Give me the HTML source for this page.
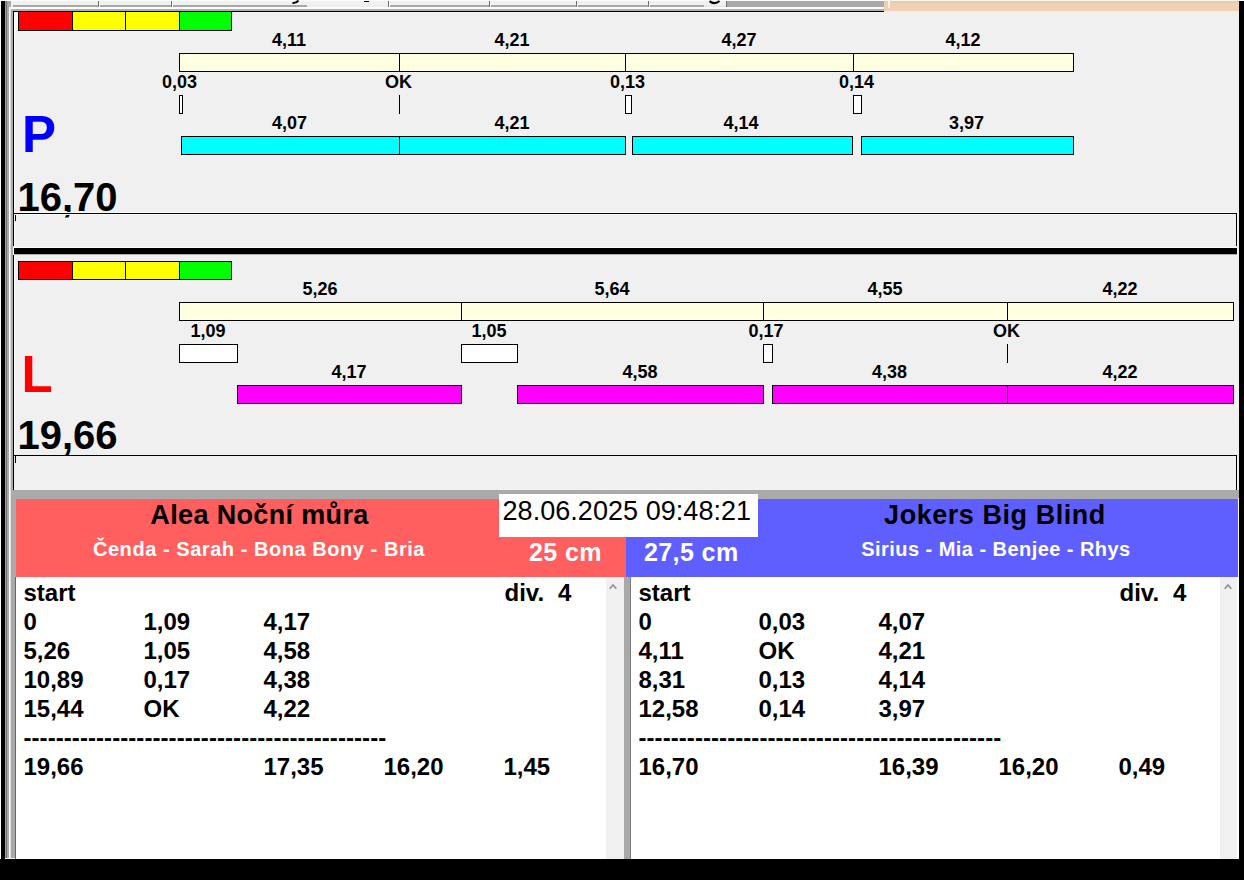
<!DOCTYPE html>
<html><head><meta charset="utf-8"><style>
html,body{margin:0;padding:0;}
body{width:1244px;height:880px;overflow:hidden;position:relative;background:#f0f0f0;font-family:"Liberation Sans",sans-serif;}
.a{position:absolute;}
.t{position:absolute;white-space:nowrap;}
</style></head><body>
<div class="a" style="left:0px;top:0px;width:1px;height:880px;background:#fafafa;"></div>
<div class="a" style="left:1px;top:1px;width:4px;height:879px;background:#000;"></div>
<div class="a" style="left:5px;top:1px;width:1px;height:857px;background:#a0a0a0;"></div>
<div class="a" style="left:6px;top:1px;width:1px;height:857px;background:#707070;"></div>
<div class="a" style="left:7px;top:1px;width:2px;height:857px;background:#aaaaaa;"></div>
<div class="a" style="left:9px;top:1px;width:2px;height:6px;background:#aaaaaa;"></div>
<div class="a" style="left:9px;top:7px;width:1px;height:851px;background:#ffffff;"></div>
<div class="a" style="left:10px;top:7px;width:1px;height:851px;background:#e0e0e0;"></div>
<div class="a" style="left:11px;top:9px;width:2px;height:481px;background:#aaaaaa;"></div>
<div class="a" style="left:13px;top:11px;width:1px;height:235px;background:#000;"></div>
<div class="a" style="left:13px;top:255px;width:1px;height:235px;background:#000;"></div>
<div class="a" style="left:13px;top:246px;width:1px;height:9px;background:#fafafa;"></div>
<div class="a" style="left:14px;top:12px;width:1px;height:234px;background:#ffffff;"></div>
<div class="a" style="left:14px;top:256px;width:1px;height:199px;background:#ffffff;"></div>
<div class="a" style="left:11px;top:498px;width:4px;height:360px;background:#aaaaaa;"></div>
<div class="a" style="left:15px;top:577px;width:1px;height:282px;background:#666666;"></div>
<div class="a" style="left:1239px;top:1px;width:5px;height:879px;background:#000;"></div>
<div class="a" style="left:1239px;top:0px;width:5px;height:1px;background:#fdfdf6;"></div>
<div class="a" style="left:0px;top:0px;width:884px;height:1px;background:#fcfcfc;"></div>
<div class="a" style="left:13px;top:1px;width:871px;height:4px;background:#eff2ef;"></div>
<div class="a" style="left:13px;top:5px;width:871px;height:2px;background:#a8a8a8;"></div>
<div class="a" style="left:98px;top:1px;width:1px;height:6px;background:#707070;"></div>
<div class="a" style="left:99px;top:1px;width:1px;height:6px;background:#ffffff;"></div>
<div class="a" style="left:171px;top:1px;width:1px;height:6px;background:#707070;"></div>
<div class="a" style="left:172px;top:1px;width:1px;height:6px;background:#ffffff;"></div>
<div class="a" style="left:388px;top:1px;width:1px;height:6px;background:#707070;"></div>
<div class="a" style="left:389px;top:1px;width:1px;height:6px;background:#ffffff;"></div>
<div class="a" style="left:489px;top:1px;width:1px;height:6px;background:#707070;"></div>
<div class="a" style="left:490px;top:1px;width:1px;height:6px;background:#ffffff;"></div>
<div class="a" style="left:576px;top:1px;width:1px;height:6px;background:#707070;"></div>
<div class="a" style="left:577px;top:1px;width:1px;height:6px;background:#ffffff;"></div>
<div class="a" style="left:648px;top:1px;width:1px;height:6px;background:#707070;"></div>
<div class="a" style="left:649px;top:1px;width:1px;height:6px;background:#ffffff;"></div>
<div class="a" style="left:726px;top:1px;width:1px;height:6px;background:#707070;"></div>
<div class="a" style="left:727px;top:1px;width:1px;height:6px;background:#ffffff;"></div>
<div class="a" style="left:727px;top:1px;width:157px;height:5px;background:#aaaaaa;"></div>
<div class="a" style="left:727px;top:6px;width:157px;height:1px;background:#a8a8a8;"></div>
<div class="a" style="left:307px;top:5px;width:81px;height:2px;background:#eeeeee;"></div>
<div class="a" style="left:704px;top:5px;width:22px;height:2px;background:#e8e8e8;"></div>
<svg class="a" style="left:290px;top:0px" width="12" height="5"><path d="M2.5 3 Q6 3.4 8.5 0.5" stroke="#000" stroke-width="2" fill="none"/></svg>
<div class="a" style="left:364px;top:1px;width:5px;height:1px;background:#000;"></div>
<svg class="a" style="left:706px;top:0px" width="16" height="6"><path d="M3.5 1.2 Q8.5 5.2 13.5 1.0" stroke="#000" stroke-width="2.2" fill="none"/></svg>
<div class="a" style="left:9px;top:7px;width:875px;height:2px;background:#fcfcfc;"></div>
<div class="a" style="left:11px;top:9px;width:873px;height:2px;background:#b0b0b0;"></div>
<div class="a" style="left:13px;top:11px;width:871px;height:1px;background:#000;"></div>
<div class="a" style="left:884px;top:0px;width:355px;height:11px;background:#efd1b4;"></div>
<div class="a" style="left:884px;top:11px;width:355px;height:2px;background:#f2efea;"></div>
<div class="a" style="left:884px;top:0px;width:355px;height:1px;background:#fbf5e8;"></div>
<div class="a" style="left:884px;top:1px;width:355px;height:2px;background:#e3cdb8;"></div>
<div class="a" style="left:888px;top:0px;width:2px;height:8px;background:#fff4e4;"></div>
<div class="a" style="left:18px;top:11px;width:55px;height:20px;background:#ff0000;border:1px solid #000;box-sizing:border-box;"></div>
<div class="a" style="left:72px;top:11px;width:54px;height:20px;background:#ffff00;border:1px solid #000;box-sizing:border-box;"></div>
<div class="a" style="left:125px;top:11px;width:55px;height:20px;background:#ffff00;border:1px solid #000;box-sizing:border-box;"></div>
<div class="a" style="left:179px;top:11px;width:53px;height:20px;background:#00ff00;border:1px solid #000;box-sizing:border-box;"></div>
<div class="a" style="left:14px;top:12px;width:4px;height:18px;background:#fafafa;"></div>
<div class="a" style="left:179px;top:53px;width:895px;height:19px;background:#ffffe1;border:1px solid #000;box-sizing:border-box;"></div>
<div class="a" style="left:399px;top:53px;width:1px;height:19px;background:#000;"></div>
<div class="a" style="left:625px;top:53px;width:1px;height:19px;background:#000;"></div>
<div class="a" style="left:853px;top:53px;width:1px;height:19px;background:#000;"></div>
<div class="t" style="left:-111px;width:800px;text-align:center;top:28.76px;font-size:18px;line-height:22px;color:#000;font-weight:bold;">4,11</div>
<div class="t" style="left:112px;width:800px;text-align:center;top:28.76px;font-size:18px;line-height:22px;color:#000;font-weight:bold;">4,21</div>
<div class="t" style="left:339px;width:800px;text-align:center;top:28.76px;font-size:18px;line-height:22px;color:#000;font-weight:bold;">4,27</div>
<div class="t" style="left:563px;width:800px;text-align:center;top:28.76px;font-size:18px;line-height:22px;color:#000;font-weight:bold;">4,12</div>
<div class="t" style="left:-220.5px;width:800px;text-align:center;top:70.76px;font-size:18px;line-height:22px;color:#000;font-weight:bold;">0,03</div>
<div class="t" style="left:-1.5px;width:800px;text-align:center;top:70.76px;font-size:18px;line-height:22px;color:#000;font-weight:bold;">OK</div>
<div class="t" style="left:227.5px;width:800px;text-align:center;top:70.76px;font-size:18px;line-height:22px;color:#000;font-weight:bold;">0,13</div>
<div class="t" style="left:456.5px;width:800px;text-align:center;top:70.76px;font-size:18px;line-height:22px;color:#000;font-weight:bold;">0,14</div>
<div class="a" style="left:179px;top:95px;width:4px;height:19px;background:#ffffff;border:1px solid #000;box-sizing:border-box;"></div>
<div class="a" style="left:399px;top:95px;width:1px;height:19px;background:#000;"></div>
<div class="a" style="left:625px;top:95px;width:7px;height:19px;background:#ffffff;border:1px solid #000;box-sizing:border-box;"></div>
<div class="a" style="left:853px;top:95px;width:9px;height:19px;background:#ffffff;border:1px solid #000;box-sizing:border-box;"></div>
<div class="t" style="left:-110.5px;width:800px;text-align:center;top:111.76px;font-size:18px;line-height:22px;color:#000;font-weight:bold;">4,07</div>
<div class="t" style="left:112px;width:800px;text-align:center;top:111.76px;font-size:18px;line-height:22px;color:#000;font-weight:bold;">4,21</div>
<div class="t" style="left:341px;width:800px;text-align:center;top:111.76px;font-size:18px;line-height:22px;color:#000;font-weight:bold;">4,14</div>
<div class="t" style="left:566.5px;width:800px;text-align:center;top:111.76px;font-size:18px;line-height:22px;color:#000;font-weight:bold;">3,97</div>
<div class="a" style="left:181px;top:136px;width:219px;height:19px;background:#00ffff;border:1px solid #000;box-sizing:border-box;"></div>
<div class="a" style="left:399px;top:136px;width:227px;height:19px;background:#00ffff;border:1px solid #000;box-sizing:border-box;"></div>
<div class="a" style="left:632px;top:136px;width:221px;height:19px;background:#00ffff;border:1px solid #000;box-sizing:border-box;"></div>
<div class="a" style="left:861px;top:136px;width:213px;height:19px;background:#00ffff;border:1px solid #000;box-sizing:border-box;"></div>
<div class="t" style="left:22px;top:104.03px;font-size:51px;line-height:61px;color:#0000ff;font-weight:bold;">P</div>
<div class="t" style="left:17.5px;top:173.14px;font-size:40px;line-height:48px;color:#000;font-weight:bold;">16,70</div>
<div class="a" style="left:13px;top:213px;width:1224px;height:1px;background:#000;"></div>
<div class="a" style="left:1236px;top:213px;width:1px;height:33px;background:#000;"></div>
<div class="a" style="left:13px;top:247px;width:1224px;height:1px;background:#fcfcfc;"></div>
<div class="a" style="left:15px;top:214px;width:1px;height:7px;background:#000;"></div>
<div class="a" style="left:14px;top:248px;width:1223px;height:6px;background:#000;"></div>
<div class="a" style="left:14px;top:254px;width:1223px;height:1px;background:#b0b0b0;"></div>
<div class="a" style="left:14px;top:212px;width:1222px;height:1px;background:#fafafa;"></div>
<div class="a" style="left:14px;top:214px;width:1222px;height:1px;background:#fafafa;"></div>
<div class="a" style="left:18px;top:261px;width:55px;height:19px;background:#ff0000;border:1px solid #000;box-sizing:border-box;"></div>
<div class="a" style="left:72px;top:261px;width:54px;height:19px;background:#ffff00;border:1px solid #000;box-sizing:border-box;"></div>
<div class="a" style="left:125px;top:261px;width:55px;height:19px;background:#ffff00;border:1px solid #000;box-sizing:border-box;"></div>
<div class="a" style="left:179px;top:261px;width:53px;height:19px;background:#00ff00;border:1px solid #000;box-sizing:border-box;"></div>
<div class="a" style="left:179px;top:302px;width:1055px;height:19px;background:#ffffe1;border:1px solid #000;box-sizing:border-box;"></div>
<div class="a" style="left:461px;top:302px;width:1px;height:19px;background:#000;"></div>
<div class="a" style="left:763px;top:302px;width:1px;height:19px;background:#000;"></div>
<div class="a" style="left:1007px;top:302px;width:1px;height:19px;background:#000;"></div>
<div class="t" style="left:-80px;width:800px;text-align:center;top:277.76px;font-size:18px;line-height:22px;color:#000;font-weight:bold;">5,26</div>
<div class="t" style="left:212px;width:800px;text-align:center;top:277.76px;font-size:18px;line-height:22px;color:#000;font-weight:bold;">5,64</div>
<div class="t" style="left:485px;width:800px;text-align:center;top:277.76px;font-size:18px;line-height:22px;color:#000;font-weight:bold;">4,55</div>
<div class="t" style="left:720px;width:800px;text-align:center;top:277.76px;font-size:18px;line-height:22px;color:#000;font-weight:bold;">4,22</div>
<div class="t" style="left:-192px;width:800px;text-align:center;top:320.26px;font-size:18px;line-height:22px;color:#000;font-weight:bold;">1,09</div>
<div class="t" style="left:89px;width:800px;text-align:center;top:320.26px;font-size:18px;line-height:22px;color:#000;font-weight:bold;">1,05</div>
<div class="t" style="left:366px;width:800px;text-align:center;top:320.26px;font-size:18px;line-height:22px;color:#000;font-weight:bold;">0,17</div>
<div class="t" style="left:606.5px;width:800px;text-align:center;top:320.26px;font-size:18px;line-height:22px;color:#000;font-weight:bold;">OK</div>
<div class="a" style="left:179px;top:344px;width:59px;height:19px;background:#ffffff;border:1px solid #000;box-sizing:border-box;"></div>
<div class="a" style="left:461px;top:344px;width:57px;height:19px;background:#ffffff;border:1px solid #000;box-sizing:border-box;"></div>
<div class="a" style="left:763px;top:344px;width:10px;height:19px;background:#ffffff;border:1px solid #000;box-sizing:border-box;"></div>
<div class="a" style="left:1007px;top:344px;width:1px;height:19px;background:#000;"></div>
<div class="t" style="left:-51px;width:800px;text-align:center;top:361.26px;font-size:18px;line-height:22px;color:#000;font-weight:bold;">4,17</div>
<div class="t" style="left:240px;width:800px;text-align:center;top:361.26px;font-size:18px;line-height:22px;color:#000;font-weight:bold;">4,58</div>
<div class="t" style="left:489.5px;width:800px;text-align:center;top:361.26px;font-size:18px;line-height:22px;color:#000;font-weight:bold;">4,38</div>
<div class="t" style="left:720px;width:800px;text-align:center;top:361.26px;font-size:18px;line-height:22px;color:#000;font-weight:bold;">4,22</div>
<div class="a" style="left:237px;top:385px;width:225px;height:19px;background:#ff00ff;border:1px solid #000;box-sizing:border-box;"></div>
<div class="a" style="left:517px;top:385px;width:247px;height:19px;background:#ff00ff;border:1px solid #000;box-sizing:border-box;"></div>
<div class="a" style="left:772px;top:385px;width:236px;height:19px;background:#ff00ff;border:1px solid #000;box-sizing:border-box;"></div>
<div class="a" style="left:1007px;top:385px;width:227px;height:19px;background:#ff00ff;border:1px solid #000;box-sizing:border-box;"></div>
<div class="t" style="left:21.5px;top:344.23px;font-size:51px;line-height:61px;color:#ff0000;font-weight:bold;">L</div>
<div class="t" style="left:17.5px;top:411.14px;font-size:40px;line-height:48px;color:#000;font-weight:bold;">19,66</div>
<div class="a" style="left:13px;top:455px;width:1224px;height:1px;background:#000;"></div>
<div class="a" style="left:1236px;top:455px;width:1px;height:35px;background:#000;"></div>
<div class="a" style="left:15px;top:456px;width:1px;height:7px;background:#000;"></div>
<div class="a" style="left:11px;top:490px;width:1228px;height:9px;background:#aaaaaa;"></div>
<div class="a" style="left:15px;top:499px;width:1px;height:78px;background:#aaaaaa;"></div>
<div class="a" style="left:16px;top:499px;width:610px;height:78px;background:#ff5f5f;"></div>
<div class="a" style="left:626px;top:499px;width:612px;height:78px;background:#5f5fff;"></div>
<div class="a" style="left:1238px;top:498px;width:1px;height:360px;background:#fcfcfc;"></div>
<div class="a" style="left:499px;top:494px;width:259px;height:43px;background:#ffffff;"></div>
<div class="t" style="left:502.5px;top:494.64px;font-size:27px;line-height:32px;color:#000;font-weight:normal;letter-spacing:0.05px;">28.06.2025 09:48:21</div>
<div class="t" style="left:-140.5px;width:800px;text-align:center;top:498.94px;font-size:27px;line-height:32px;color:#000;font-weight:bold;letter-spacing:0.35px;">Alea Noční můra</div>
<div class="t" style="left:-141px;width:800px;text-align:center;top:537.07px;font-size:20px;line-height:24px;color:#ffffff;font-weight:bold;letter-spacing:0.55px;">Čenda - Sarah - Bona Bony - Bria</div>
<div class="t" style="left:529px;top:537.34px;font-size:25px;line-height:30px;color:#ffffff;font-weight:bold;letter-spacing:0.4px;">25 cm</div>
<div class="t" style="left:595px;width:800px;text-align:center;top:498.94px;font-size:27px;line-height:32px;color:#000;font-weight:bold;letter-spacing:0.55px;">Jokers Big Blind</div>
<div class="t" style="left:596px;width:800px;text-align:center;top:537.07px;font-size:20px;line-height:24px;color:#ffffff;font-weight:bold;letter-spacing:0.45px;">Sirius - Mia - Benjee - Rhys</div>
<div class="t" style="left:644px;top:537.34px;font-size:25px;line-height:30px;color:#ffffff;font-weight:bold;letter-spacing:0.4px;">27,5 cm</div>
<div class="a" style="left:16px;top:577px;width:590px;height:282px;background:#ffffff;"></div>
<div class="a" style="left:606px;top:577px;width:17px;height:282px;background:#f0f0f0;"></div>
<div class="a" style="left:624px;top:577px;width:6px;height:282px;background:#a8a8a8;"></div>
<div class="a" style="left:630px;top:577px;width:1px;height:282px;background:#808080;"></div>
<div class="a" style="left:631px;top:577px;width:589px;height:282px;background:#ffffff;"></div>
<div class="a" style="left:1220px;top:577px;width:17px;height:282px;background:#f0f0f0;"></div>
<div class="a" style="left:1237px;top:577px;width:2px;height:282px;background:#fcfcfc;"></div>
<svg class="a" style="left:608.3px;top:582px" width="10" height="8"><path d="M1.7 6.7 L5 3 L8.3 6.7" stroke="#8c948c" stroke-width="1.7" fill="none"/></svg>
<svg class="a" style="left:1223.3px;top:582px" width="10" height="8"><path d="M1.7 6.7 L5 3 L8.3 6.7" stroke="#8c948c" stroke-width="1.7" fill="none"/></svg>
<div class="t" style="left:558px;top:578.18px;font-size:24px;line-height:29px;color:#000;font-weight:bold;">4</div>
<div class="t" style="left:1173px;top:578.18px;font-size:24px;line-height:29px;color:#000;font-weight:bold;">4</div>
<div class="t" style="left:23.5px;top:578.18px;font-size:24px;line-height:29px;color:#000;font-weight:bold;white-space:pre;">start</div>
<div class="t" style="left:504.5px;top:578.18px;font-size:24px;line-height:29px;color:#000;font-weight:bold;white-space:pre;">div.</div>
<div class="t" style="left:23.5px;top:607.18px;font-size:24px;line-height:29px;color:#000;font-weight:bold;white-space:pre;">0</div>
<div class="t" style="left:143.5px;top:607.18px;font-size:24px;line-height:29px;color:#000;font-weight:bold;white-space:pre;">1,09</div>
<div class="t" style="left:263.5px;top:607.18px;font-size:24px;line-height:29px;color:#000;font-weight:bold;white-space:pre;">4,17</div>
<div class="t" style="left:23.5px;top:636.18px;font-size:24px;line-height:29px;color:#000;font-weight:bold;white-space:pre;">5,26</div>
<div class="t" style="left:143.5px;top:636.18px;font-size:24px;line-height:29px;color:#000;font-weight:bold;white-space:pre;">1,05</div>
<div class="t" style="left:263.5px;top:636.18px;font-size:24px;line-height:29px;color:#000;font-weight:bold;white-space:pre;">4,58</div>
<div class="t" style="left:23.5px;top:665.18px;font-size:24px;line-height:29px;color:#000;font-weight:bold;white-space:pre;">10,89</div>
<div class="t" style="left:143.5px;top:665.18px;font-size:24px;line-height:29px;color:#000;font-weight:bold;white-space:pre;">0,17</div>
<div class="t" style="left:263.5px;top:665.18px;font-size:24px;line-height:29px;color:#000;font-weight:bold;white-space:pre;">4,38</div>
<div class="t" style="left:23.5px;top:694.18px;font-size:24px;line-height:29px;color:#000;font-weight:bold;white-space:pre;">15,44</div>
<div class="t" style="left:143.5px;top:694.18px;font-size:24px;line-height:29px;color:#000;font-weight:bold;white-space:pre;">OK</div>
<div class="t" style="left:263.5px;top:694.18px;font-size:24px;line-height:29px;color:#000;font-weight:bold;white-space:pre;">4,22</div>
<div class="t" style="left:23.5px;top:723.18px;font-size:24px;line-height:29px;color:#000;font-weight:bold;white-space:pre;letter-spacing:0.07px;">---------------------------------------------</div>
<div class="t" style="left:23.5px;top:752.18px;font-size:24px;line-height:29px;color:#000;font-weight:bold;white-space:pre;">19,66</div>
<div class="t" style="left:263.5px;top:752.18px;font-size:24px;line-height:29px;color:#000;font-weight:bold;white-space:pre;">17,35</div>
<div class="t" style="left:383.5px;top:752.18px;font-size:24px;line-height:29px;color:#000;font-weight:bold;white-space:pre;">16,20</div>
<div class="t" style="left:503.5px;top:752.18px;font-size:24px;line-height:29px;color:#000;font-weight:bold;white-space:pre;">1,45</div>
<div class="t" style="left:638.5px;top:578.18px;font-size:24px;line-height:29px;color:#000;font-weight:bold;white-space:pre;">start</div>
<div class="t" style="left:1119.5px;top:578.18px;font-size:24px;line-height:29px;color:#000;font-weight:bold;white-space:pre;">div.</div>
<div class="t" style="left:638.5px;top:607.18px;font-size:24px;line-height:29px;color:#000;font-weight:bold;white-space:pre;">0</div>
<div class="t" style="left:758.5px;top:607.18px;font-size:24px;line-height:29px;color:#000;font-weight:bold;white-space:pre;">0,03</div>
<div class="t" style="left:878.5px;top:607.18px;font-size:24px;line-height:29px;color:#000;font-weight:bold;white-space:pre;">4,07</div>
<div class="t" style="left:638.5px;top:636.18px;font-size:24px;line-height:29px;color:#000;font-weight:bold;white-space:pre;">4,11</div>
<div class="t" style="left:758.5px;top:636.18px;font-size:24px;line-height:29px;color:#000;font-weight:bold;white-space:pre;">OK</div>
<div class="t" style="left:878.5px;top:636.18px;font-size:24px;line-height:29px;color:#000;font-weight:bold;white-space:pre;">4,21</div>
<div class="t" style="left:638.5px;top:665.18px;font-size:24px;line-height:29px;color:#000;font-weight:bold;white-space:pre;">8,31</div>
<div class="t" style="left:758.5px;top:665.18px;font-size:24px;line-height:29px;color:#000;font-weight:bold;white-space:pre;">0,13</div>
<div class="t" style="left:878.5px;top:665.18px;font-size:24px;line-height:29px;color:#000;font-weight:bold;white-space:pre;">4,14</div>
<div class="t" style="left:638.5px;top:694.18px;font-size:24px;line-height:29px;color:#000;font-weight:bold;white-space:pre;">12,58</div>
<div class="t" style="left:758.5px;top:694.18px;font-size:24px;line-height:29px;color:#000;font-weight:bold;white-space:pre;">0,14</div>
<div class="t" style="left:878.5px;top:694.18px;font-size:24px;line-height:29px;color:#000;font-weight:bold;white-space:pre;">3,97</div>
<div class="t" style="left:638.5px;top:723.18px;font-size:24px;line-height:29px;color:#000;font-weight:bold;white-space:pre;letter-spacing:0.07px;">---------------------------------------------</div>
<div class="t" style="left:638.5px;top:752.18px;font-size:24px;line-height:29px;color:#000;font-weight:bold;white-space:pre;">16,70</div>
<div class="t" style="left:878.5px;top:752.18px;font-size:24px;line-height:29px;color:#000;font-weight:bold;white-space:pre;">16,39</div>
<div class="t" style="left:998.5px;top:752.18px;font-size:24px;line-height:29px;color:#000;font-weight:bold;white-space:pre;">16,20</div>
<div class="t" style="left:1118.5px;top:752.18px;font-size:24px;line-height:29px;color:#000;font-weight:bold;white-space:pre;">0,49</div>
<div class="a" style="left:0px;top:859px;width:1244px;height:21px;background:#000;"></div>
</body></html>
